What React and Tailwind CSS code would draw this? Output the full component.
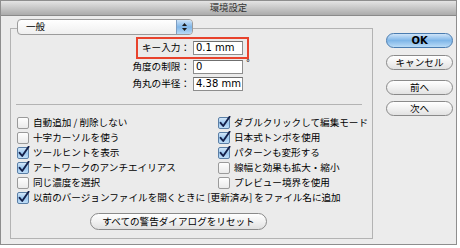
import React from 'react';

const leftChecks = [
  { label: '自動追加 / 削除しない', on: false },
  { label: '十字カーソルを使う', on: false },
  { label: 'ツールヒントを表示', on: true },
  { label: 'アートワークのアンチエイリアス', on: true },
  { label: '同じ濃度を選択', on: false },
];

const rightChecks = [
  { label: 'ダブルクリックして編集モード', on: true },
  { label: '日本式トンボを使用', on: true },
  { label: 'パターンも変形する', on: true },
  { label: '線幅と効果も拡大・縮小', on: false },
  { label: 'プレビュー境界を使用', on: false },
];

function CheckBox({ on }) {
  return (
    <svg width="13" height="13" viewBox="0 0 13 13" className="shrink-0">
      <defs>
        <linearGradient id="cbOff" x1="0" y1="0" x2="0" y2="1">
          <stop offset="0" stopColor="#ffffff" />
          <stop offset="1" stopColor="#e9e9e9" />
        </linearGradient>
        <linearGradient id="cbOn" x1="0" y1="0" x2="0" y2="1">
          <stop offset="0" stopColor="#d9eafa" />
          <stop offset="0.5" stopColor="#9cc8ef" />
          <stop offset="1" stopColor="#c4e0f8" />
        </linearGradient>
      </defs>
      <rect x="0.5" y="1.5" width="11" height="11" rx="1.5" fill={on ? 'url(#cbOn)' : 'url(#cbOff)'} stroke={on ? '#5b7fa6' : '#9a9a9a'} />
      {on && <path d="M2.6 6.8 L5.2 10 L11.6 0.8" fill="none" stroke="#14204a" strokeWidth="1.9" strokeLinecap="round" strokeLinejoin="round" />}
    </svg>
  );
}

function CheckRow({ label, on }) {
  return (
    <div className="h-[15px] flex items-center gap-[3px]">
      <CheckBox on={on} />
      <span className="text-[9.6px] leading-none text-black whitespace-nowrap">{label}</span>
    </div>
  );
}

function Field({ value }) {
  return (
    <div className="w-[50px] h-[14px] bg-white border border-[#8d8d8d] border-t-[#6f6f6f] flex items-center pl-[2px] font-['DejaVu_Sans',sans-serif] text-[10px] leading-none text-black">
      {value}
    </div>
  );
}

function PillButton({ children, primary }) {
  return (
    <div
      className={
        primary
          ? 'w-[67px] h-[15px] rounded-full border border-[#4a7cb0] bg-gradient-to-b from-[#cfe4f8] via-[#7fb6e8] to-[#b9dbf6] flex items-center justify-center text-[10px] leading-none text-black'
          : 'w-[67px] h-[15px] rounded-full border border-[#8a8a8a] bg-gradient-to-b from-[#ffffff] via-[#f1f1f1] to-[#e2e2e2] flex items-center justify-center text-[9.6px] leading-none text-black'
      }
    >
      {children}
    </div>
  );
}

export default function App() {
  return (
    <div className="w-[460px] h-[248px] bg-white font-['Noto_Sans_CJK_JP','DejaVu_Sans',sans-serif]">
      <div className="w-[457px] h-[245px] border border-[#8e8e8e] bg-[#ececec] flex flex-col">
        {/* title bar */}
        <div className="h-[15px] shrink-0 border-b border-[#8a8a8a] bg-gradient-to-b from-[#e4e4e4] to-[#ababab] flex items-center justify-center text-[9.4px] leading-none text-[#333]">
          環境設定
        </div>

        <div className="flex flex-1 pl-[9px] pr-[3px] pt-[3px]">
          {/* left: popup + group */}
          <div className="w-[364px] flex flex-col">
            <div className="relative z-10 ml-[7px] w-[176px] h-[16px] rounded-[4px] border border-[#9b9b9b] bg-gradient-to-b from-[#ffffff] to-[#efefef] flex items-center overflow-hidden">
              <span className="flex-1 pl-[8px] text-[9.6px] leading-none text-black">一般</span>
              <div className="w-[16px] h-full border-l border-[#7d9ec2] bg-gradient-to-b from-[#cde3f7] via-[#80b6e8] to-[#b7daf6] flex flex-col items-center justify-center gap-[2px]">
                <svg width="5" height="3" viewBox="0 0 5 3"><path d="M0 3 L2.5 0 L5 3 Z" fill="#1b1b1b" /></svg>
                <svg width="5" height="3" viewBox="0 0 5 3"><path d="M0 0 L2.5 3 L5 0 Z" fill="#1b1b1b" /></svg>
              </div>
            </div>

            <div className="-mt-[7px] border border-[#b3b3b3] bg-[#ebebeb] pt-[8px] pb-[8px]">
              {/* numeric fields */}
              <div className="w-[232px] flex flex-col items-end">
                <div className="-mr-[6px] border-2 border-[#e8432d] px-[4px] py-[2px] flex items-center gap-[3px]">
                  <span className="text-[9.6px] leading-none">キー入力：</span>
                  <Field value="0.1 mm" />
                </div>
                <div className="-mr-[7px] mt-[1px] flex items-center gap-[3px]">
                  <span className="text-[9.6px] leading-none">角度の制限：</span>
                  <Field value="0" />
                  <span className="w-[4px] self-start font-['DejaVu_Sans',sans-serif] text-[8px] leading-none">°</span>
                </div>
                <div className="mt-[3px] flex items-center gap-[3px]">
                  <span className="text-[9.6px] leading-none">角丸の半径：</span>
                  <Field value="4.38 mm" />
                </div>
              </div>

              <div className="mt-[13px] ml-[5px] mr-[10px] h-px bg-[#b3b3b3]" />

              {/* checkboxes */}
              <div className="mt-[10px] ml-[6px] grid grid-cols-[201px_1fr]">
                <div className="flex flex-col">
                  {leftChecks.map((c) => (
                    <CheckRow key={c.label} label={c.label} on={c.on} />
                  ))}
                </div>
                <div className="flex flex-col">
                  {rightChecks.map((c) => (
                    <CheckRow key={c.label} label={c.label} on={c.on} />
                  ))}
                </div>
              </div>
              <div className="ml-[6px]">
                <CheckRow label="以前のバージョンファイルを開くときに [更新済み] をファイル名に追加" on={true} />
              </div>

              <div className="mt-[8px] ml-[79px] w-[177px] h-[17px] rounded-full border border-[#8a8a8a] bg-gradient-to-b from-[#ffffff] via-[#f1f1f1] to-[#e0e0e0] flex items-center justify-center text-[9.6px] leading-none">
                すべての警告ダイアログをリセット
              </div>
            </div>
          </div>

          {/* right: buttons */}
          <div className="ml-[13px] pt-[14px] flex flex-col">
            <PillButton primary>
              <span className="font-['DejaVu_Sans',sans-serif] font-semibold">OK</span>
            </PillButton>
            <div className="mt-[7px]"><PillButton>キャンセル</PillButton></div>
            <div className="mt-[10px]"><PillButton>前へ</PillButton></div>
            <div className="mt-[6px]"><PillButton>次へ</PillButton></div>
          </div>
        </div>
      </div>
    </div>
  );
}
